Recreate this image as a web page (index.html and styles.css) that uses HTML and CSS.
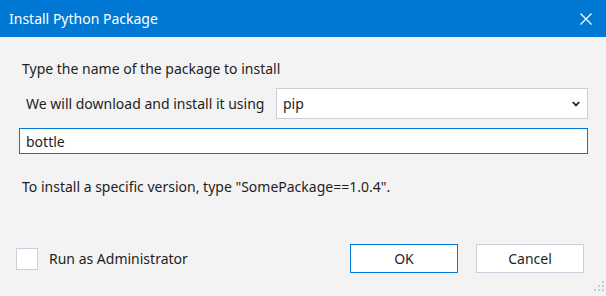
FILE: index.html
```html
<!DOCTYPE html>
<html lang="en">
<head>
    <meta charset="UTF-8">
    <meta name="viewport" content="width=device-width, initial-scale=1.0">
    <title>Install Python Package</title>
    <link rel="stylesheet" href="styles.css">
</head>
<body>

    <div class="titlebar">
        <span class="title">Install Python Package</span>
        <svg class="close" width="12" height="12" viewBox="0 0 12 12">
            <path d="M0.5 0.5 L11.5 11.5 M11.5 0.5 L0.5 11.5" stroke="white" stroke-width="1.2" fill="none"/>
        </svg>
    </div>

    <div class="content">
        <p class="lead">Type the name of the package to install</p>
        <div class="row">
            <span class="using">We will download and install it using</span>
            <div class="select">
                <span>pip</span>
                <svg width="8" height="6" viewBox="0 0 8 6">
                    <path d="M0.8 1 L4 4.4 L7.2 1" stroke="#1e1e1e" stroke-width="1.8" fill="none"/>
                </svg>
            </div>
        </div>
        <div class="name">bottle</div>
        <p class="hint">To install a specific version, type "SomePackage==1.0.4".</p>
    </div>

    <div class="footer">
        <div class="check"></div>
        <span class="admin">Run as Administrator</span>
        <button class="btn ok">OK</button>
        <button class="btn cancel">Cancel</button>
    </div>

    <svg class="grip" width="14" height="14" viewBox="0 0 14 14">
        <rect x="11" y="1" width="2" height="2"/>
        <rect x="7" y="5" width="2" height="2"/>
        <rect x="11" y="5" width="2" height="2"/>
        <rect x="3" y="9" width="2" height="2"/>
        <rect x="7" y="9" width="2" height="2"/>
        <rect x="11" y="9" width="2" height="2"/>
    </svg>

</body>
</html>
```

FILE: styles.css
```css
html, body {
    margin: 0;
    padding: 0;
}
body {
    width: 606px;
    height: 296px;
    background: #f3f3f3;
    color: #1e1e1e;
    font-family: 'Noto Sans', 'Open Sans', sans-serif;
    font-size: 14px;
    display: flex;
    flex-direction: column;
    position: relative;
    overflow: hidden;
}
.titlebar {
    height: 37px;
    background: #0078d4;
    color: white;
    display: flex;
    align-items: center;
    justify-content: space-between;
    padding: 0 14px 0 9px;
    flex-shrink: 0;
}
.title {
    font-size: 14px;
}
.content {
    padding: 0 18px 0 19px;
}
.lead {
    margin: 22px 0 0 3px;
    line-height: 20px;
}
.row {
    display: flex;
    align-items: center;
    margin-top: 9px;
}
.using {
    margin-left: 7px;
}
.select {
    width: 297px;
    height: 29px;
    background: white;
    border: 1px solid #cccedb;
    display: flex;
    align-items: center;
    justify-content: space-between;
    padding: 0 7px 0 6px;
    box-sizing: content-box;
    margin-left: auto;
}
.select span {
    margin-top: -1px;
}
.name {
    margin-top: 9px;
    height: 24px;
    border: 1px solid #0078d4;
    background: white;
    display: flex;
    align-items: center;
    padding-left: 6px;
}
.hint {
    margin: 23px 0 0 3px;
    line-height: 20px;
}
.footer {
    margin-top: auto;
    display: flex;
    align-items: center;
    padding: 0 22px 23px 16px;
}
.check {
    width: 20px;
    height: 20px;
    border: 1px solid #cccedb;
    background: white;
}
.admin {
    margin-left: 11px;
}
.btn {
    width: 108px;
    height: 29px;
    background: white;
    font-family: inherit;
    font-size: 14px;
    color: #1e1e1e;
    padding: 0;
}
.ok {
    margin-left: auto;
    border: 1px solid #0078d4;
}
.cancel {
    margin-left: 18px;
    border: 1px solid #cccedb;
}
.grip {
    position: absolute;
    right: 1px;
    bottom: 2px;
    fill: #c6c9d6;
}
```
